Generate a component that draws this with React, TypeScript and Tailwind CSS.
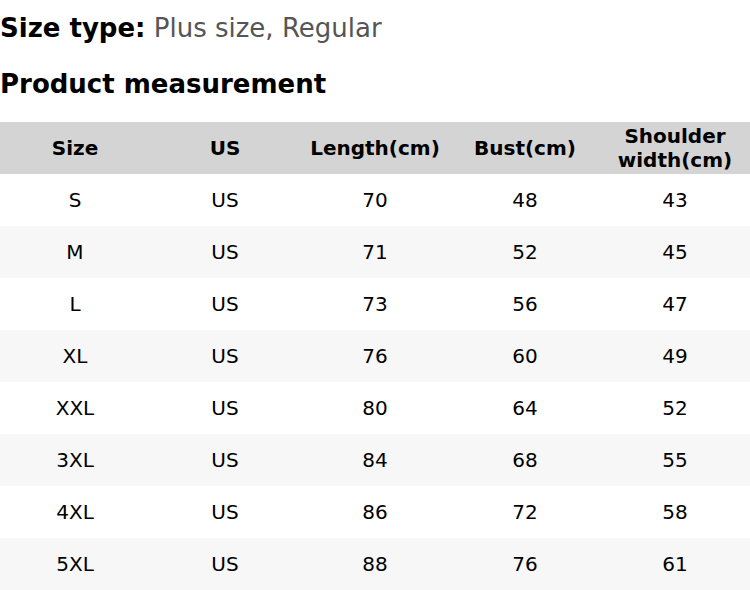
import React from "react";

const rows = [
  ["S", "US", "70", "48", "43"],
  ["M", "US", "71", "52", "45"],
  ["L", "US", "73", "56", "47"],
  ["XL", "US", "76", "60", "49"],
  ["XXL", "US", "80", "64", "52"],
  ["3XL", "US", "84", "68", "55"],
  ["4XL", "US", "86", "72", "58"],
  ["5XL", "US", "88", "76", "61"],
];

export default function App() {
  return (
    <div className="w-[750px] h-[590px] bg-white text-black overflow-hidden" style={{ fontFamily: '"DejaVu Sans", sans-serif' }}>
      <div className="h-[56px] leading-[56px] text-[26px] whitespace-nowrap">
        <span className="font-bold">Size type:</span>{" "}
        <span className="text-[#555555]">Plus size, Regular</span>
      </div>
      <div className="h-[56px] leading-[56px] text-[26px] font-bold whitespace-nowrap">Product measurement</div>
      <div className="mt-[10px]">
        <div className="grid grid-cols-5 h-[52px] bg-[#d4d4d4] text-[20px] font-bold">
          {["Size", "US", "Length(cm)", "Bust(cm)"].map((h) => (
            <div key={h} className="flex items-center justify-center">{h}</div>
          ))}
          <div className="flex flex-col items-center justify-center leading-[24px] text-center">
            <span>Shoulder</span>
            <span>width(cm)</span>
          </div>
        </div>
        {rows.map((r, i) => (
          <div key={i} className={`grid grid-cols-5 h-[52px] text-[20px] ${i % 2 === 1 ? "bg-[#f7f7f7]" : "bg-white"}`}>
            {r.map((c, j) => (
              <div key={j} className="flex items-center justify-center">{c}</div>
            ))}
          </div>
        ))}
      </div>
    </div>
  );
}
